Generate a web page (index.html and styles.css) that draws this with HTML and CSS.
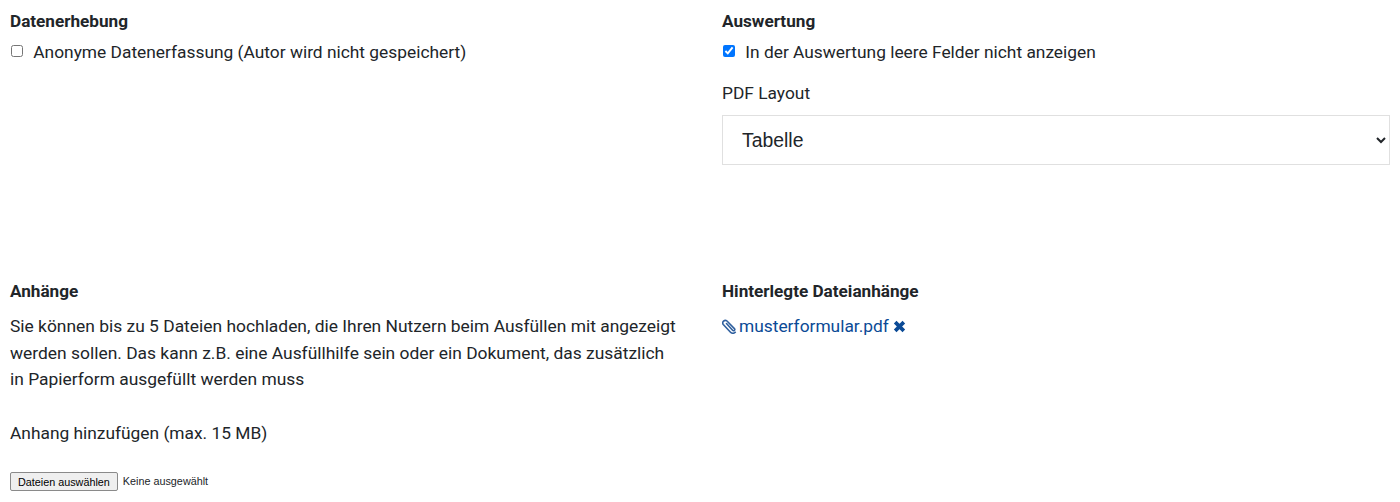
FILE: index.html
```html
<!DOCTYPE html>
<html lang="de">
<head>
  <meta charset="UTF-8">
  <meta name="viewport" content="width=device-width, initial-scale=1.0">
  <title>Formular Einstellungen</title>
  <link rel="stylesheet" href="styles.css">
</head>
<body>
  <div class="row row-top">
    <div class="col">
      <h3>Datenerhebung</h3>
      <label class="check">
        <input type="checkbox"> Anonyme Datenerfassung (Autor wird nicht gespeichert)
      </label>
    </div>
    <div class="col">
      <h3>Auswertung</h3>
      <label class="check">
        <input type="checkbox" checked> In der Auswertung leere Felder nicht anzeigen
      </label>
      <label class="field-label" for="layout">PDF Layout</label>
      <select id="layout" class="select">
        <option>Tabelle</option>
      </select>
    </div>
  </div>

  <div class="row">
    <div class="col">
      <h3>Anhänge</h3>
      <p class="info">Sie können bis zu 5 Dateien hochladen, die Ihren Nutzern beim Ausfüllen mit angezeigt werden sollen. Das kann z.B. eine Ausfüllhilfe sein oder ein Dokument, das zusätzlich in Papierform ausgefüllt werden muss</p>
      <p class="add-label">Anhang hinzufügen (max. 15 MB)</p>
      <div class="file">
        <button type="button" class="file-btn">Dateien auswählen</button>
        <span>Keine ausgewählt</span>
      </div>
    </div>
    <div class="col">
      <h3>Hinterlegte Dateianhänge</h3>
      <div class="attachment">
        <svg class="icon" viewBox="0 0 15 15" width="15" height="15" aria-hidden="true">
          <path d="M4.5 4.5 10.6 11.3a1.2 1.2 0 0 0 1.8-1.7L5 2a2.6 2.6 0 0 0-3.7 3.6l7.2 7.6a3.3 3.3 0 0 0 4.8.1" fill="none" stroke="#31619f" stroke-width="1.6" stroke-linecap="round"/>
        </svg>
        <a href="#">musterformular.pdf</a>
        <svg class="icon-x" viewBox="0 0 12 12" width="13" height="13" aria-hidden="true">
          <path d="M2 2 10 10M10 2 2 10" fill="none" stroke="#0b4a96" stroke-width="3.4"/>
        </svg>
      </div>
    </div>
  </div>
</body>
</html>
```

FILE: styles.css
```css
* { box-sizing: border-box; }
body {
  margin: 0;
  padding: 11px 10px 0;
  font-family: Roboto, Arial, sans-serif;
  font-size: 17.35px;
  line-height: 26.5px;
  color: #212529;
  background: #fff;
  overflow: hidden;
}
.row {
  display: grid;
  grid-template-columns: 1fr 668px;
  column-gap: 42px;
}
.row-top { height: 270px; }
h3 {
  margin: 0 0 8px;
  font-size: 17.15px;
  line-height: 20px;
  font-weight: 700;
}
.check { display: block; }
.check input {
  width: 12px;
  height: 12px;
  margin: 0 6px 0 1px;
  vertical-align: 1px;
}
.field-label {
  display: block;
  margin-top: 14px;
}
.select {
  display: block;
  width: 100%;
  height: 50px;
  margin-top: 9px;
  padding: 0 15px;
  border: 1px solid #e0e0e0;
  background: #fff;
  color: #212529;
  font-family: "Liberation Sans", Arial, sans-serif;
  font-size: 19.4px;
}
.info {
  margin: 12px 0 0;
  max-width: 668px;
  font-size: 17.42px;
}
.add-label { margin: 27px 0 0; }
.file {
  display: flex;
  align-items: center;
  gap: 5px;
  margin-top: 26px;
  font-family: "Liberation Sans", Arial, sans-serif;
  font-size: 10.8px;
  line-height: 19px;
}
.file-btn {
  height: 19px;
  padding: 0 7px;
  border: 1px solid #8a8a8a;
  border-radius: 2px;
  background: #efefef;
  color: #000;
  font: inherit;
}
.attachment {
  display: flex;
  align-items: center;
  gap: 2px;
  margin-top: 12px;
}
.attachment a {
  color: #0b4a96;
  text-decoration: none;
}
.icon-x { margin-left: 2px; }
```
